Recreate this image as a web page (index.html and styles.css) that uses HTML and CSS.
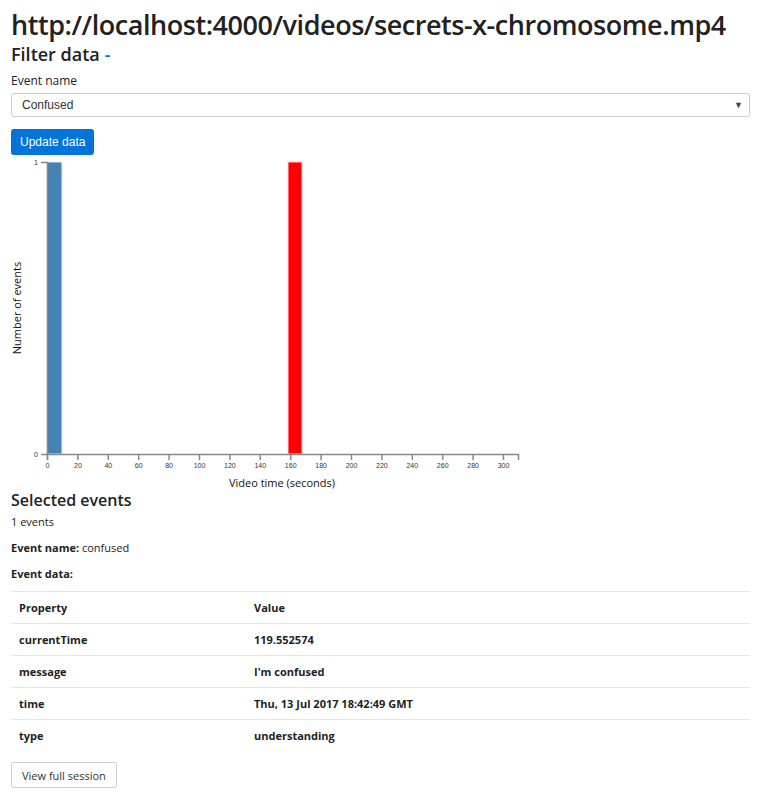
FILE: index.html
```html
<!DOCTYPE html>
<html>
<head>
<meta charset="utf-8">
<link rel="stylesheet" href="styles.css">
</head>
<body>
<div class="page">
  <h1 class="title">http://localhost:4000/videos/secrets-x-chromosome.mp4</h1>
  <h2 class="subtitle">Filter data <a class="toggle" href="#">-</a></h2>
  <div class="field">
    <label class="label">Event name</label>
    <div class="select">
      <span class="select-value">Confused</span>
      <span class="select-arrow">&#9660;</span>
    </div>
  </div>
  <button class="btn-primary">Update data</button>
  <svg class="chart" width="530" height="335" viewBox="0 0 530 335">
    <rect x="47" y="7" width="15" height="292" fill="#4682b4" stroke="#e6eef5" stroke-width="1"/>
    <rect x="288" y="7" width="14" height="292" fill="#ff0000" stroke="#ffd0d0" stroke-width="1"/>
    <g class="axis">
      <path d="M41,7.5H47.5V299.5H41" fill="none" stroke="#888" stroke-width="1.5"/>
      <text x="38" y="10" text-anchor="end">1</text>
      <text x="38" y="302" text-anchor="end">0</text>
      <path d="M47.5,305V299.5H518.5V305" fill="none" stroke="#888" stroke-width="1.5"/>
    </g>
    <g class="axis" id="xticks"></g>
    <text class="axis-title" transform="translate(21,153) rotate(-90)" text-anchor="middle">Number of events</text>
    <text class="axis-title" x="282" y="332" text-anchor="middle">Video time (seconds)</text>
  </svg>
  <h3 class="section">Selected events</h3>
  <p class="count">1 events</p>
  <p class="meta"><b>Event name:</b> confused</p>
  <p class="meta"><b>Event data:</b></p>
  <table class="data">
    <tr><th class="col-prop">Property</th><th>Value</th></tr>
    <tr><td>currentTime</td><td>119.552574</td></tr>
    <tr><td>message</td><td>I'm confused</td></tr>
    <tr><td>time</td><td>Thu, 13 Jul 2017 18:42:49 GMT</td></tr>
    <tr><td>type</td><td>understanding</td></tr>
  </table>
  <button class="btn-default">View full session</button>
</div>
<script src="chart.js"></script>
</body>
</html>
```
FILE: chart.js
```js
(function () {
  var g = document.getElementById('xticks');
  var ns = 'http://www.w3.org/2000/svg';
  for (var v = 0; v <= 300; v += 20) {
    var x = 47.5 + v * 1.52;
    var l = document.createElementNS(ns, 'line');
    l.setAttribute('x1', x); l.setAttribute('x2', x);
    l.setAttribute('y1', 299.5); l.setAttribute('y2', 305);
    l.setAttribute('stroke', '#888'); l.setAttribute('stroke-width', '1.5');
    g.appendChild(l);
    var t = document.createElementNS(ns, 'text');
    t.setAttribute('x', x); t.setAttribute('y', 313);
    t.setAttribute('text-anchor', 'middle');
    t.textContent = v;
    g.appendChild(t);
  }
})();
```
FILE: styles.css
```css
html, body {
  margin: 0;
  padding: 0;
  background: #fff;
}
.page {
  padding: 0 7px 0 11px;
  font-family: "Open Sans", sans-serif;
  color: #222;
}
.title {
  margin: 0;
  padding-top: 8px;
  font-size: 27px;
  font-weight: 600;
  line-height: 34px;
  letter-spacing: -0.45px;
}
.subtitle {
  margin: 0;
  font-size: 18px;
  font-weight: 600;
  line-height: 24px;
}
.toggle {
  color: #0074d9;
  text-decoration: none;
}
.field {
  margin-top: 6px;
}
.label {
  display: block;
  font-size: 12px;
  line-height: 17px;
  margin-bottom: 4px;
}
.select {
  height: 22px;
  border: 1px solid #ccc;
  border-radius: 3px;
  display: flex;
  align-items: center;
  justify-content: space-between;
  padding: 0 6px 0 10px;
  font-family: "Liberation Sans", Arial, sans-serif;
  font-size: 12px;
  color: #333;
}
.select-arrow {
  font-size: 9px;
  color: #444;
}
.btn-primary {
  display: block;
  margin-top: 12px;
  height: 26px;
  padding: 0 9px;
  border: none;
  border-radius: 3px;
  background: #0074d9;
  color: #fff;
  font-family: "Liberation Sans", Arial, sans-serif;
  font-size: 12px;
}
.chart {
  display: block;
  margin-left: -11px;
}
.axis text {
  font-family: "Liberation Sans", Arial, sans-serif;
  font-size: 7px;
  fill: #333;
}
.axis-title {
  font-family: "Open Sans", sans-serif;
  font-size: 11px;
  fill: #111;
}
.section {
  margin: 0;
  font-size: 16px;
  font-weight: 600;
  line-height: 20px;
}
.count {
  margin: 4px 0 0;
  font-size: 11px;
  line-height: 16px;
}
.meta {
  margin: 10px 0 0;
  font-size: 11px;
  line-height: 16px;
}
.data {
  width: 100%;
  margin-top: 9px;
  border-collapse: collapse;
  font-size: 11px;
}
.data th, .data td {
  text-align: left;
  font-weight: 700;
  padding: 0 8px;
  height: 31px;
  border-top: 1px solid #e6e6e6;
}
.data .col-prop {
  width: 219px;
}
.btn-default {
  display: block;
  margin-top: 11px;
  height: 26px;
  padding: 0 10px;
  border: 1px solid #ccc;
  border-radius: 3px;
  background: #fff;
  color: #333;
  font-family: "Open Sans", sans-serif;
  font-size: 11px;
}
```
